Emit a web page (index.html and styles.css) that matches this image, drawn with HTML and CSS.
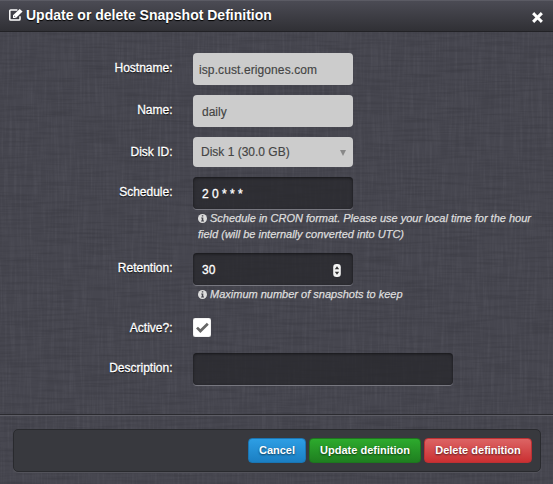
FILE: index.html
```
<!DOCTYPE html>
<html lang="en">
<head>
<meta charset="utf-8">
<title>Update or delete Snapshot Definition</title>
<link rel="stylesheet" href="styles.css">
</head>
<body>
<div class="modal">
  <svg class="linen" width="553" height="484" aria-hidden="true">
    <filter id="warp" x="0" y="0" width="100%" height="100%" color-interpolation-filters="sRGB">
      <feTurbulence type="fractalNoise" baseFrequency="0.4 0.025" numOctaves="2" seed="4"/>
      <feColorMatrix values="0 0 0 0 0.6  0 0 0 0 0.6  0 0 0 0 0.64  0.5 0 0 0 -0.21"/>
    </filter>
    <filter id="weft" x="0" y="0" width="100%" height="100%" color-interpolation-filters="sRGB">
      <feTurbulence type="fractalNoise" baseFrequency="0.025 0.4" numOctaves="2" seed="9"/>
      <feColorMatrix values="0 0 0 0 0.1  0 0 0 0 0.1  0 0 0 0 0.12  0.8 0 0 0 -0.34"/>
    </filter>
    <rect width="553" height="484" filter="url(#warp)"/>
    <rect width="553" height="484" filter="url(#weft)"/>
  </svg>
  <header class="header">
    <svg class="edit" width="14" height="12" viewBox="0 0 14 12">
      <path d="M8.4 1.1H1.7Q.8 1.1.8 2V10.2Q.8 11.1 1.7 11.1H10.1Q11 11.1 11 10.2V7.2" fill="none" stroke="#fff" stroke-width="1.5"/>
      <path d="M4 9V6.2L10.7 0 13.6 2.5 6.9 9Z" fill="#fff"/>
      <path d="M5 6.9 6.4 8.1" stroke="#414147" stroke-width=".7"/>
    </svg>
    <h3 class="title">Update or delete Snapshot Definition</h3>
    <svg class="close" width="11" height="11" viewBox="0 0 11 11"><path d="M2.2 2.2 8.8 8.8M8.8 2.2 2.2 8.8" stroke="#fff" stroke-width="3" stroke-linecap="square"/></svg>
  </header>
  <form class="form">
    <div class="row"><label class="label">Hostname:</label><div class="field disabled host">isp.cust.erigones.com</div></div>
    <div class="row"><label class="label">Name:</label><div class="field disabled">daily</div></div>
    <div class="row"><label class="label">Disk ID:</label><div class="field disabled select">Disk 1 (30.0 GB)<span class="arrow"></span></div></div>
    <div class="row help-row">
      <label class="label">Schedule:</label>
      <div class="control">
        <div class="field dark">2 0 * * *</div>
        <p class="help"><svg class="info" width="9" height="9" viewBox="0 0 9 9"><circle cx="4.5" cy="4.5" r="4.5" fill="#ddd"/><path d="M3.8 1.3h1.5v1.3H3.8zM3.2 3.5h2.1v3h.7v1H3.1v-1h.7V4.4h-.6z" fill="#44444c"/></svg><span>Schedule in CRON format. Please use your local time for the hour</span><br><span>field (will be internally converted into UTC)</span></p>
      </div>
    </div>
    <div class="row help-row retention">
      <label class="label">Retention:</label>
      <div class="control">
        <div class="field dark number">30<svg class="spinner" width="8" height="13" viewBox="0 0 8 13"><rect x=".2" width="7.6" height="13" rx="3.2" fill="#f3f3f3"/><path d="M4 2.3 6.2 5.2H1.8zM4 10.7 6.2 7.8H1.8z" fill="#333"/></svg></div>
        <p class="help"><svg class="info" width="9" height="9" viewBox="0 0 9 9"><circle cx="4.5" cy="4.5" r="4.5" fill="#ddd"/><path d="M3.8 1.3h1.5v1.3H3.8zM3.2 3.5h2.1v3h.7v1H3.1v-1h.7V4.4h-.6z" fill="#44444c"/></svg><span>Maximum number of snapshots to keep</span></p>
      </div>
    </div>
    <div class="row active"><label class="label">Active?:</label><div class="check"><svg width="18" height="19" viewBox="0 0 18 19"><path d="M4 9.6 7.4 13 14.8 5.8" fill="none" stroke="#666" stroke-width="2.7"/></svg></div></div>
    <div class="row"><label class="label">Description:</label><div class="field dark wide"></div></div>
  </form>
  <footer class="footer">
    <div class="actions">
      <button class="btn blue">Cancel</button>
      <button class="btn green">Update definition</button>
      <button class="btn red">Delete definition</button>
    </div>
  </footer>
</div>
</body>
</html>
```
FILE: styles.css
```
* { box-sizing: border-box; }
body { margin: 0; font: 12px/20px "Liberation Sans", Arial, sans-serif; color: #fff; }
.modal { position: relative; isolation: isolate; display: flex; flex-direction: column; width: 553px; height: 484px; overflow: hidden; background: #46464f; }
.linen { position: absolute; inset: 0; z-index: -1; opacity: .42; }
.header { display: flex; align-items: center; height: 32px; padding: 0 10px 0 9px; background: linear-gradient(#4b4b54, #303035); border-top: 1px solid #5b5b64; border-bottom: 1px solid #222226; }
.edit { margin-top: -2px; }
.title { flex: 1; margin: 0 0 0 3px; padding-bottom: 2px; font-size: 14px; line-height: 20px; white-space: nowrap; text-shadow: 0 1px 1px #000; }
.close { margin-top: 3px; }
.form { display: flex; flex-direction: column; gap: 10px; height: 382px; padding-top: 21px; }
.row { display: flex; align-items: flex-start; }
.label { width: 172.5px; margin-right: 20.5px; padding-top: 5px; text-align: right; -webkit-text-stroke: .3px #fff; text-shadow: 0 1px 1px #000; }
.field { display: flex; align-items: center; width: 160px; height: 32px; padding: 2px 9px 0; border-radius: 4px; white-space: pre; }
.disabled { background: #ccc; color: #444; -webkit-text-stroke: .15px #444; }
.host { padding-left: 6px; letter-spacing: .1px; }
.select { height: 30px; padding: 0 7px 0 8px; justify-content: space-between; }
.arrow { margin-top: 2px; border: 3px solid transparent; border-top: 6px solid #888; border-bottom: 0; }
.dark { background: rgba(37, 37, 41, .72); box-shadow: inset 0 1px 3px rgba(0, 0, 0, .55), 0 1px 0 #77777f; -webkit-text-stroke: .3px #fff; }
.number { justify-content: space-between; padding-right: 12px; }
.wide { width: 260px; }
.help { margin: 0; padding: 1px 0 0 5px; font-size: 11px; line-height: 16px; font-style: italic; color: #ddd; white-space: nowrap; -webkit-text-stroke: .25px #ddd; }
.info { margin-right: 3px; vertical-align: -1px; }
.help-row { height: 66px; }
.retention { height: 55px; }
.active { height: 25px; }
.active .label { padding-top: 0; }
.check { width: 18px; height: 19px; background: #fff; border-radius: 2px; box-shadow: inset 0 0 1px #777; }
.footer { height: 70px; padding: 14px 12px 0 13px; border-top: 1px solid #2b2b30; box-shadow: inset 0 1px #5d5d65; }
.actions { display: flex; justify-content: flex-end; align-items: center; gap: 3px; height: 43px; padding: 0 8px; background: #38393e; border: 1px solid #292a2e; border-radius: 5px; box-shadow: 0 1px #53535b; }
.btn { height: 25px; padding: 0 0 1px; border: 1px solid; border-radius: 4px; color: #fff; font: bold 11px/18px "Liberation Sans", Arial, sans-serif; text-shadow: 0 1px 2px rgba(0, 0, 0, .6); white-space: nowrap; }
.blue { width: 58px; background: linear-gradient(#2d9ee4, #1b7fc3); border-color: #1a75b3; }
.green { width: 112px; background: linear-gradient(#2daa2d, #1f7f20); border-color: #1d761e; }
.red { width: 108px; background: linear-gradient(#dc6464, #cb3032); border-color: #bd3033; }
```
